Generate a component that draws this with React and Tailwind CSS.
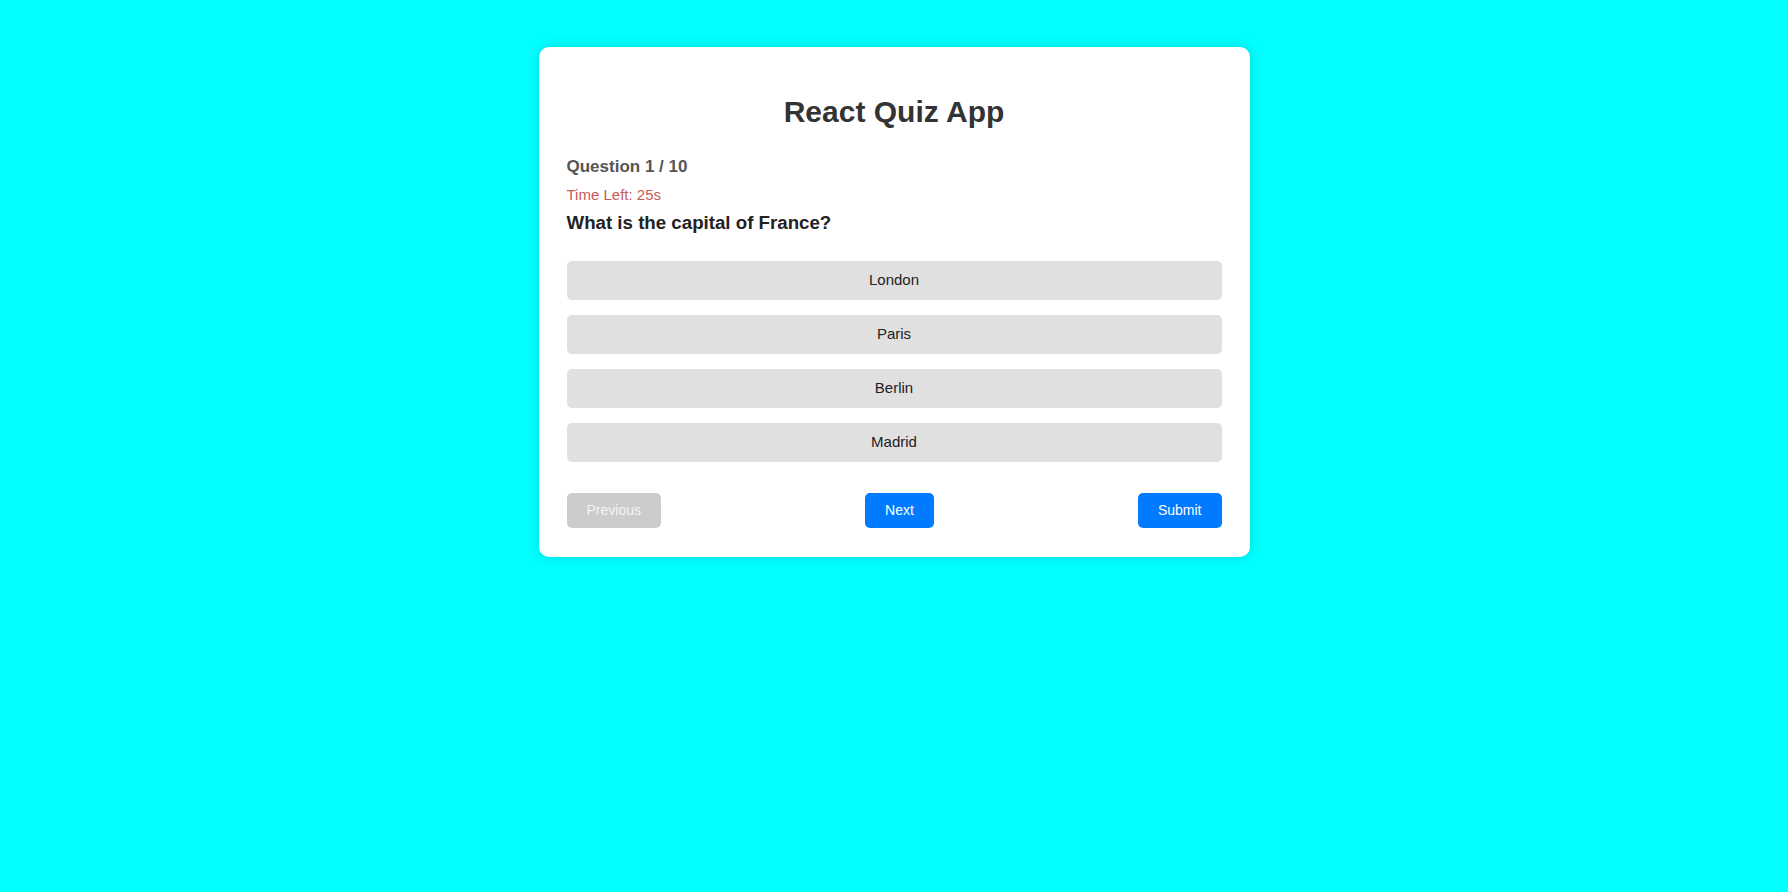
import { useState } from 'react';

const questions = [
  { q: 'What is the capital of France?', options: ['London', 'Paris', 'Berlin', 'Madrid'] },
];

export default function App() {
  const [index] = useState(0);
  const [timeLeft] = useState(25);
  const current = questions[index];

  return (
    <div className="min-h-screen bg-[#00ffff] pt-[47px] font-['Liberation_Sans',Arial,sans-serif]">
      <div className="mx-auto w-[711px] rounded-[10px] bg-white px-[28px] pt-[28px] pb-[29px] shadow-[0_0_12px_rgba(0,0,0,0.15)]">
        {/* Header */}
        <h1 className="mt-[20px] text-center text-[30px] leading-[34px] font-bold text-[#333]">React Quiz App</h1>

        <p className="mt-[28px] text-[17px] leading-[20px] font-bold text-[#555]">Question 1 / 10</p>
        <p className="mt-[9px] text-[15px] leading-[18px] text-[#c85a5a]">Time Left: {timeLeft}s</p>
        <h3 className="mt-[8px] text-[18.7px] leading-[22px] font-bold text-[#222]">{current.q}</h3>

        {/* Options */}
        <div className="mt-[27px] flex flex-col gap-[15px]">
          {current.options.map((opt) => (
            <button
              key={opt}
              className="h-[39px] w-full rounded-[5px] bg-[#e0e0e0] text-[15px] text-[#222]"
            >
              {opt}
            </button>
          ))}
        </div>

        {/* Navigation */}
        <div className="mt-[31px] flex items-center justify-between">
          <button disabled className="h-[35px] rounded-[5px] bg-[#cccccc] px-[20px] text-[14px] text-[#f4f4f4]">
            Previous
          </button>
          <button className="h-[35px] rounded-[5px] bg-[#007bff] px-[20px] text-[14px] text-white">Next</button>
          <button className="h-[35px] rounded-[5px] bg-[#007bff] px-[20px] text-[14px] text-white">Submit</button>
        </div>
      </div>
    </div>
  );
}
